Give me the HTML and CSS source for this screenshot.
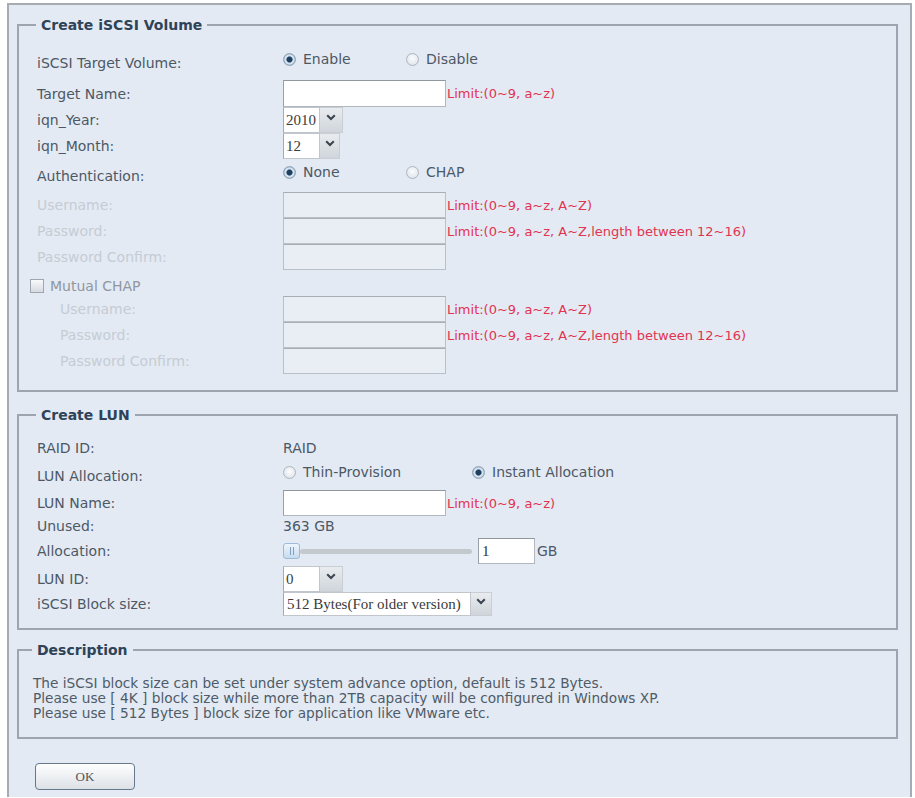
FILE: index.html
```html
<!DOCTYPE html>
<html lang="en">
<head>
  <meta charset="UTF-8">
  <meta name="viewport" content="width=device-width, initial-scale=1.0">
  <title>Create iSCSI Volume</title>
  <link rel="stylesheet" href="styles.css">
</head>
<body>
  <div class="panel">
    <fieldset class="group group-target">
      <legend>Create iSCSI Volume</legend>
      <div class="row row-radio">
        <span class="name">iSCSI Target Volume:</span>
        <div class="value">
          <span class="opt"><span class="radio on"></span>Enable</span>
          <span class="opt"><span class="radio"></span>Disable</span>
        </div>
      </div>
      <div class="row row-name">
        <span class="name">Target Name:</span>
        <div class="value">
          <input class="field" type="text">
          <span class="limit">Limit:(0~9, a~z)</span>
        </div>
      </div>
      <div class="row">
        <span class="name">iqn_Year:</span>
        <div class="value">
          <span class="select"><span class="sel-val">2010</span><span class="sel-btn"><svg width="10" height="7" viewBox="0 0 10 7"><path d="M1.2 1.2 5 5 8.8 1.2" fill="none" stroke="#3a4450" stroke-width="2"/></svg></span></span>
        </div>
      </div>
      <div class="row">
        <span class="name">iqn_Month:</span>
        <div class="value">
          <span class="select select-short"><span class="sel-val">12</span><span class="sel-btn"><svg width="10" height="7" viewBox="0 0 10 7"><path d="M1.2 1.2 5 5 8.8 1.2" fill="none" stroke="#3a4450" stroke-width="2"/></svg></span></span>
        </div>
      </div>
      <div class="row row-radio row-auth">
        <span class="name">Authentication:</span>
        <div class="value">
          <span class="opt"><span class="radio on"></span>None</span>
          <span class="opt"><span class="radio"></span>CHAP</span>
        </div>
      </div>
      <div class="row">
        <span class="name off">Username:</span>
        <div class="value">
          <input class="field" type="text" disabled>
          <span class="limit">Limit:(0~9, a~z, A~Z)</span>
        </div>
      </div>
      <div class="row">
        <span class="name off">Password:</span>
        <div class="value">
          <input class="field" type="text" disabled>
          <span class="limit">Limit:(0~9, a~z, A~Z,length between 12~16)</span>
        </div>
      </div>
      <div class="row">
        <span class="name off">Password Confirm:</span>
        <div class="value">
          <input class="field" type="text" disabled>
        </div>
      </div>
      <div class="row row-check">
        <span class="mutual"><span class="check"></span>Mutual CHAP</span>
      </div>
      <div class="row">
        <span class="name off sub">Username:</span>
        <div class="value">
          <input class="field" type="text" disabled>
          <span class="limit">Limit:(0~9, a~z, A~Z)</span>
        </div>
      </div>
      <div class="row">
        <span class="name off sub">Password:</span>
        <div class="value">
          <input class="field" type="text" disabled>
          <span class="limit">Limit:(0~9, a~z, A~Z,length between 12~16)</span>
        </div>
      </div>
      <div class="row">
        <span class="name off sub">Password Confirm:</span>
        <div class="value">
          <input class="field" type="text" disabled>
        </div>
      </div>
    </fieldset>

    <fieldset class="group group-lun">
      <legend>Create LUN</legend>
      <div class="row row-raid">
        <span class="name">RAID ID:</span>
        <div class="value">RAID</div>
      </div>
      <div class="row row-radio row-alloc">
        <span class="name">LUN Allocation:</span>
        <div class="value">
          <span class="opt opt-wide"><span class="radio"></span>Thin-Provision</span>
          <span class="opt"><span class="radio on"></span>Instant Allocation</span>
        </div>
      </div>
      <div class="row">
        <span class="name">LUN Name:</span>
        <div class="value">
          <input class="field" type="text">
          <span class="limit">Limit:(0~9, a~z)</span>
        </div>
      </div>
      <div class="row row-unused">
        <span class="name">Unused:</span>
        <div class="value">363 GB</div>
      </div>
      <div class="row row-size">
        <span class="name">Allocation:</span>
        <div class="value">
          <span class="thumb"><i></i><i></i></span>
          <span class="track"></span>
          <input class="field field-num" type="text" value="1">
          <span class="unit">GB</span>
        </div>
      </div>
      <div class="row">
        <span class="name">LUN ID:</span>
        <div class="value">
          <span class="select"><span class="sel-val">0</span><span class="sel-btn"><svg width="10" height="7" viewBox="0 0 10 7"><path d="M1.2 1.2 5 5 8.8 1.2" fill="none" stroke="#3a4450" stroke-width="2"/></svg></span></span>
        </div>
      </div>
      <div class="row row-block">
        <span class="name">iSCSI Block size:</span>
        <div class="value">
          <span class="select select-wide"><span class="sel-val">512 Bytes(For older version)</span><span class="sel-btn"><svg width="10" height="7" viewBox="0 0 10 7"><path d="M1.2 1.2 5 5 8.8 1.2" fill="none" stroke="#3a4450" stroke-width="2"/></svg></span></span>
        </div>
      </div>
    </fieldset>

    <fieldset class="group group-desc">
      <legend>Description</legend>
      <p>The iSCSI block size can be set under system advance option, default is 512 Bytes.</p>
      <p>Please use [ 4K ] block size while more than 2TB capacity will be configured in Windows XP.</p>
      <p>Please use [ 512 Bytes ] block size for application like VMware etc.</p>
    </fieldset>

    <button class="btn" type="button">OK</button>
  </div>
</body>
</html>
```

FILE: styles.css
```css
body {
  margin: 0;
  background: #fff;
  font-family: "DejaVu Sans", Verdana, sans-serif;
  font-size: 14px;
  color: #4d5864;
}
.panel {
  margin: 3px 3px 0 7px;
  padding: 11px 12px 7px 8px;
  background: #e3eaf4;
  border: 2px solid #a7acb2;
  border-bottom: none;
}
.group {
  margin: 0 0 14px;
  padding: 12px 10px 16px 18px;
  min-width: 0;
  border: 2px solid #9da6b0;
}
.group legend {
  margin-left: -1px;
  padding: 0 5px;
  font-size: 14px;
  font-weight: bold;
  line-height: 18px;
  color: #2e4357;
}
.group-lun {
  margin-bottom: 11px;
  padding-top: 10px;
  padding-bottom: 12px;
}
.group-desc {
  margin-bottom: 24px;
  padding: 17px 10px 16px 14px;
}
.row {
  display: grid;
  grid-template-columns: 246px 1fr;
  align-items: center;
  height: 26px;
  box-sizing: border-box;
}
.row-name {
  height: 27px;
}
.row-radio {
  height: 34px;
}
.row-auth {
  height: 33px;
}
.row-radio .value {
  align-self: start;
  padding-top: 5px;
}
.row-alloc {
  height: 28px;
}
.row-alloc .value {
  padding-top: 2px;
}
.row-raid {
  height: 28px;
}
.row-unused {
  height: 20px;
}
.row-size {
  height: 30px;
}
.row-block {
  height: 24px;
}
.row-check {
  grid-template-columns: 1fr;
  padding-top: 6px;
}
.name {
  white-space: nowrap;
}
.name.off {
  color: #c6ccd3;
}
.name.sub {
  padding-left: 23px;
}
.value {
  display: flex;
  align-items: center;
  white-space: nowrap;
}
.opt {
  display: inline-flex;
  align-items: center;
  gap: 7px;
  min-width: 123px;
  line-height: 17px;
}
.opt-wide {
  min-width: 189px;
}
.radio {
  flex-shrink: 0;
  width: 13px;
  height: 13px;
  box-sizing: border-box;
  border: 1px solid #adb4bc;
  border-radius: 50%;
  background: radial-gradient(circle at 50% 40%, #fbfcfd, #d9dfe6);
}
.radio.on {
  border-color: #8ea3b8;
  background: radial-gradient(circle, #1f3f5f 0 2.5px, #6f8aa5 3px, #d4e3f1 3.6px 4.6px, #b2c1d0 5.2px);
}
.field {
  flex-shrink: 0;
  width: 163px;
  height: 26px;
  box-sizing: border-box;
  margin: 0;
  padding: 0 3px;
  border: 1px solid #b0b7be;
  border-top-color: #8f979f;
  border-left-color: #999fa6;
  background: #fff;
  font: 14px "Liberation Serif", serif;
  color: #333;
}
.row-name .field {
  height: 27px;
}
.field:disabled {
  background: #e9eef5;
  border-color: #b9c0c8;
  border-top-color: #a7aeb6;
}
.limit {
  margin-left: 1px;
  font-size: 13px;
  color: #e2334f;
}
.select {
  display: inline-flex;
  height: 26px;
  box-sizing: border-box;
}
.sel-val {
  display: flex;
  align-items: center;
  width: 37px;
  box-sizing: border-box;
  padding-left: 2px;
  background: #fff;
  border: 1px solid #c0c6cc;
  border-left-color: #a3aab1;
  font: 15px "Liberation Serif", serif;
  color: #3a3a3a;
}
.sel-btn {
  display: flex;
  justify-content: center;
  width: 23px;
  padding-top: 6px;
  box-sizing: border-box;
  background: linear-gradient(#e9ecef, #cfd5db);
  border: 1px solid #c9ced4;
  border-left: none;
}
.select-short .sel-btn {
  width: 20px;
}
.select-wide {
  height: 24px;
}
.select-wide .sel-val {
  width: 188px;
  padding-left: 3px;
}
.select-wide .sel-btn {
  width: 21px;
  padding-top: 5px;
}
.mutual {
  display: flex;
  align-items: center;
  gap: 6px;
  margin-left: -7px;
  color: #8f979f;
}
.check {
  width: 14px;
  height: 14px;
  box-sizing: border-box;
  border: 1px solid #9ea6ae;
  background: linear-gradient(#f8f9fa, #d6dbe1);
}
.thumb {
  display: flex;
  justify-content: center;
  gap: 2px;
  flex-shrink: 0;
  width: 17px;
  height: 16px;
  box-sizing: border-box;
  padding-top: 3px;
  border: 1px solid #9dbbd9;
  border-radius: 3px;
  background: linear-gradient(#eef5fc, #c6dbef);
}
.thumb i {
  width: 1px;
  height: 8px;
  background: #7f9fc0;
}
.track {
  flex-shrink: 0;
  width: 172px;
  height: 5px;
  border-radius: 3px;
  background: #c4c9ce;
}
.field-num {
  width: 57px;
  margin-left: 6px;
  font-size: 15px;
}
.unit {
  margin-left: 2px;
}
.group-desc p {
  margin: 0;
  font-size: 13.7px;
  line-height: 15px;
  color: #4f5b67;
}
.btn {
  display: block;
  width: 100px;
  height: 27px;
  margin-left: 18px;
  border: 1px solid #66788c;
  border-radius: 4px;
  background: linear-gradient(#fefefe, #dce1e7);
  font: 13px "Liberation Serif", serif;
  color: #555;
}
```
